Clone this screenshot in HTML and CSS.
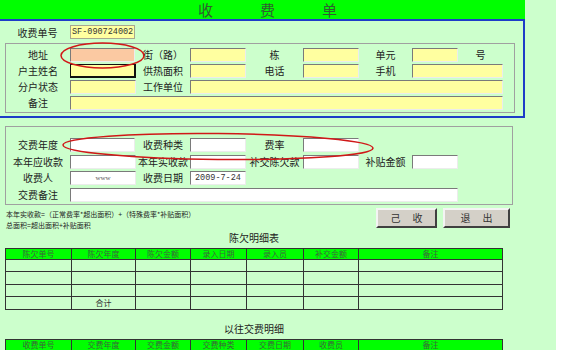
FILE: index.html
```html
<!DOCTYPE html>
<html>
  <head>
    <meta charset="UTF-8">
    <title>收费单</title>
    <link rel="stylesheet" href="styles.css">
  </head>
  <body>
    <div class="page">
      <div class="title"><span>收</span><span>费</span><span>单</span></div>

      <div class="panel">
        <div class="no-row">
          <span class="lbl">收费单号</span>
          <span class="no-field">SF-090724002</span>
        </div>

        <!-- 住户信息 -->
        <div class="box box-house">
          <label>地址</label>
          <input class="f addr" type="text">
          <label>街（路）</label>
          <input class="f" type="text">
          <label>栋</label>
          <input class="f" type="text">
          <label>单元</label>
          <input class="f" type="text">
          <label>号</label>

          <label>户主姓名</label>
          <input class="f focus" type="text">
          <label>供热面积</label>
          <input class="f" type="text">
          <label>电话</label>
          <input class="f" type="text">
          <label>手机</label>
          <input class="f span-2" type="text">

          <label>分户状态</label>
          <input class="f" type="text">
          <label>工作单位</label>
          <input class="f to-end-4" type="text">

          <label>备注</label>
          <input class="f to-end-2" type="text">
        </div>
      </div>

      <!-- 交费信息 -->
      <div class="box box-pay">
        <label>交费年度</label>
        <input class="f w" type="text">
        <label>收费种类</label>
        <input class="f w" type="text">
        <label>费率</label>
        <input class="f w" type="text">
        <span></span><span></span><span></span>

        <label>本年应收款</label>
        <input class="f w" type="text">
        <label>本年实收款</label>
        <input class="f w" type="text">
        <label>补交陈欠款</label>
        <input class="f w" type="text">
        <label>补贴金额</label>
        <input class="f w" type="text">
        <span></span>

        <label>收费人</label>
        <input class="f w user" type="text" value="www">
        <label>收费日期</label>
        <input class="f w date" type="text" value="2009-7-24">
        <span></span><span></span><span></span><span></span><span></span>

        <label>交费备注</label>
        <input class="f w memo" type="text">
      </div>

      <div class="actions">
        <div class="notes">
          <p>本年实收款=（正常费率*超出面积）+（特殊费率*补贴面积）</p>
          <p>总面积=超出面积+补贴面积</p>
        </div>
        <div class="btns">
          <button class="btn">己 收</button>
          <button class="btn btn-exit">退 出</button>
        </div>
      </div>

      <h2 class="caption">陈欠明细表</h2>
      <table class="grid">
        <tr>
          <th>陈欠单号</th><th>陈欠年度</th><th>陈欠金额</th><th>录入日期</th><th>录入员</th><th>补交金额</th><th>备注</th>
        </tr>
        <tr><td></td><td></td><td></td><td></td><td></td><td></td><td></td></tr>
        <tr><td></td><td></td><td></td><td></td><td></td><td></td><td></td></tr>
        <tr><td></td><td></td><td></td><td></td><td></td><td></td><td></td></tr>
        <tr><td></td><td>合计</td><td></td><td></td><td></td><td></td><td></td></tr>
      </table>

      <h2 class="caption caption-2">以往交费明细</h2>
      <table class="grid">
        <tr>
          <th>收费单号</th><th>交费年度</th><th>交费金额</th><th>交费种类</th><th>交费日期</th><th>收费员</th><th>备注</th>
        </tr>
        <tr><td></td><td></td><td></td><td></td><td></td><td></td><td></td></tr>
        <tr><td></td><td></td><td></td><td></td><td></td><td></td><td></td></tr>
      </table>

      <!-- 红圈标注 -->
      <svg class="marks" width="556" height="350" viewBox="0 0 556 350">
        <ellipse cx="102.5" cy="55.5" rx="41.5" ry="12.5" fill="none" stroke="#d01818" stroke-width="1.5"/>
        <ellipse cx="218" cy="146.5" rx="155" ry="13" fill="none" stroke="#d01818" stroke-width="1.5" transform="rotate(0.6 218 146.5)"/>
      </svg>
    </div>
  </body>
</html>
```

FILE: styles.css
```css
* {
  box-sizing: border-box;
  margin: 0;
  padding: 0;
}

body {
  font-family: "Noto Sans CJK SC", "Liberation Sans", sans-serif;
  font-size: 10px;
  color: #222;
  background-color: #fff;
}

.page {
  position: relative;
  width: 556px;
  height: 350px;
  overflow: hidden;
  background-color: #ccffcc;
}

.title {
  width: 525px;
  height: 19px;
  padding-left: 10px;
  display: flex;
  justify-content: center;
  align-items: center;
  gap: 47px;
  background-color: #00ff00;
  color: #2f5f2f;
  font-size: 15px;
  line-height: 19px;
}

.panel {
  width: 525px;
  padding: 4px 0 3px 5px;
  border: 2px solid #1e3cc8;
  border-left: none;
}

.no-row {
  display: flex;
  align-items: center;
  height: 14px;
}

.no-row .lbl {
  width: 65px;
  text-align: center;
}

.no-field {
  width: 65px;
  height: 14px;
  padding-left: 1px;
  background-color: #ffffa0;
  border: 1px solid #a8a890;
  font-family: "Liberation Mono", monospace;
  font-size: 8.5px;
  line-height: 12px;
  white-space: nowrap;
  overflow: hidden;
  color: #333;
}

.box {
  display: grid;
  grid-template-columns: 64px 66px 54px 56px 57px 56px 53px 46px 45px;
  grid-auto-rows: 14px;
  row-gap: 2px;
  align-items: center;
  border: 1px solid #a0a0a0;
}

.box-house {
  width: 510px;
  margin-top: 4px;
  padding: 4px 0 2px;
}

.box-pay {
  width: 508px;
  margin: 8px 0 0 5px;
  padding: 11px 0 2px;
  row-gap: 2.5px;
}

.box label {
  text-align: center;
  white-space: nowrap;
  line-height: 14px;
}

.f {
  width: 100%;
  height: 14px;
  border-style: solid;
  border-width: 1px;
  border-color: #7a7a7a #ececec #ececec #7a7a7a;
  background-color: #ffffa0;
  font: inherit;
  outline: none;
}

.box .f:nth-of-type(1) {
  width: 65px;
}

.f.addr {
  background-color: #fbc9a2;
}

.f.focus {
  border: 1px solid #111;
  border-right-width: 2px;
  border-bottom-width: 2px;
}

.f.w {
  background-color: #fff;
}

.f.user {
  text-align: center;
  font-family: "Liberation Serif", serif;
  font-size: 7px;
  color: #555;
}

.f.date {
  padding-left: 4px;
  font-family: "Liberation Mono", monospace;
  font-size: 8.5px;
  color: #333;
}

.span-2 {
  grid-column: span 2;
}

.to-end-4 {
  grid-column: 4 / 10;
}

.to-end-2 {
  grid-column: 2 / 10;
}

.f.memo {
  grid-column: 2 / 9;
}

.actions {
  display: flex;
  width: 513px;
  margin-top: 3px;
  padding: 0 3px 0 6px;
}

.notes {
  flex: 1;
  padding-top: 1px;
  font-size: 7px;
  line-height: 11px;
  color: #222;
}

.btns {
  display: flex;
  gap: 6px;
}

.btn {
  width: 61px;
  height: 20px;
  background-color: #d4d0c8;
  border: 2px solid;
  border-color: #f4f4f4 #404040 #404040 #f4f4f4;
  font-family: inherit;
  font-size: 10px;
  word-spacing: 10px;
  color: #333;
}

.btn-exit {
  width: 67px;
}

.caption {
  width: 498px;
  margin: 1px 0 4px 5px;
  text-align: center;
  font-size: 10px;
  font-weight: normal;
  line-height: 12px;
  color: #222;
}

.caption-2 {
  margin-top: 13px;
}

.grid {
  width: 498px;
  margin-left: 5px;
  border-collapse: collapse;
  table-layout: fixed;
}

.grid th,
.grid td {
  border: 1px solid #333;
  padding: 0;
  text-align: center;
  font-size: 8px;
  font-weight: normal;
  line-height: 9px;
}

.grid th {
  height: 11px;
  background-color: #00ff00;
  color: #3a6a3a;
}

.grid td {
  height: 12.5px;
  color: #333;
}

.grid th:nth-child(1) { width: 66px; }
.grid th:nth-child(2) { width: 64px; }
.grid th:nth-child(3) { width: 55px; }
.grid th:nth-child(4) { width: 56px; }
.grid th:nth-child(5) { width: 57px; }
.grid th:nth-child(6) { width: 55px; }

.marks {
  position: absolute;
  top: 0;
  left: 0;
  pointer-events: none;
}
```
